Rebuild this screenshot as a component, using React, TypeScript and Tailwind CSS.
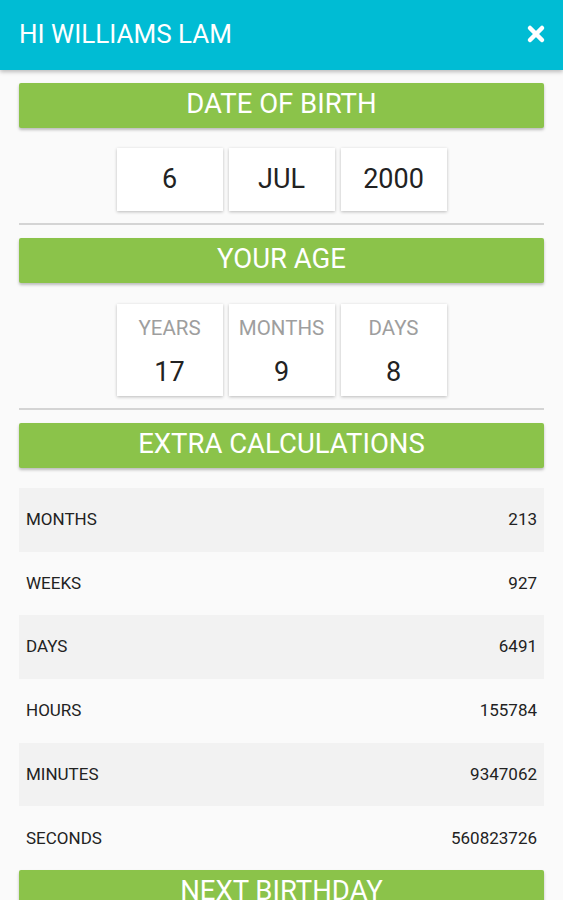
import { X } from "lucide-react";

const dob = ["6", "JUL", "2000"];

const age = [
  { label: "YEARS", value: "17" },
  { label: "MONTHS", value: "9" },
  { label: "DAYS", value: "8" },
];

const extras = [
  { label: "MONTHS", value: "213" },
  { label: "WEEKS", value: "927" },
  { label: "DAYS", value: "6491" },
  { label: "HOURS", value: "155784" },
  { label: "MINUTES", value: "9347062" },
  { label: "SECONDS", value: "560823726" },
];

function SectionBar({ title }: { title: string }) {
  return (
    <div className="flex h-[45px] items-center justify-center rounded-[2px] bg-[#8bc34a] pb-[4px] text-[27.5px] leading-none text-white shadow-[0_2px_3px_rgba(0,0,0,0.25)]">
      {title}
    </div>
  );
}

export default function App() {
  return (
    <div className="h-[900px] overflow-hidden bg-[#fafafa] font-['Roboto',sans-serif]">
      {/* Toolbar */}
      <header className="relative z-10 flex h-[70px] items-center justify-between bg-[#00bcd4] pb-[2px] pl-[19px] pr-[15px] shadow-[0_2px_4px_rgba(0,0,0,0.25)]">
        <h1 className="text-[26px] text-white">HI WILLIAMS LAM</h1>
        <X className="h-[24px] w-[24px] text-white" strokeWidth={4.5} />
      </header>

      <main className="px-[19px] pt-[13px]">
        <SectionBar title="DATE OF BIRTH" />

        <div className="mt-[20px] flex justify-center gap-[6px]">
          {dob.map((d) => (
            <div
              key={d}
              className="flex h-[63px] w-[106px] items-center justify-center bg-white text-[27px] text-[#222] shadow-[0_1px_3px_rgba(0,0,0,0.25)]"
            >
              {d}
            </div>
          ))}
        </div>

        <div className="mt-[12px] h-[2px] bg-[#d4d4d4]" />

        <div className="mt-[13px]">
          <SectionBar title="YOUR AGE" />
        </div>

        <div className="mt-[21px] flex justify-center gap-[6px]">
          {age.map((a) => (
            <div
              key={a.label}
              className="flex h-[92px] w-[106px] flex-col items-center bg-white shadow-[0_1px_3px_rgba(0,0,0,0.25)]"
            >
              <span className="mt-[14px] text-[20.5px] leading-none text-[#9e9e9e]">{a.label}</span>
              <span className="mt-[20px] text-[27px] leading-none text-[#222]">{a.value}</span>
            </div>
          ))}
        </div>

        <div className="mt-[12px] h-[2px] bg-[#d4d4d4]" />

        <div className="mt-[13px]">
          <SectionBar title="EXTRA CALCULATIONS" />
        </div>

        <div className="mt-[20px]">
          {extras.map((e, i) => (
            <div
              key={e.label}
              className={`flex h-[63.7px] items-center justify-between px-[7px] text-[17px] text-[#222] ${
                i % 2 === 0 ? "bg-[#f2f2f2]" : "bg-[#fafafa]"
              }`}
            >
              <span>{e.label}</span>
              <span>{e.value}</span>
            </div>
          ))}
        </div>

        <SectionBar title="NEXT BIRTHDAY" />
      </main>
    </div>
  );
}
